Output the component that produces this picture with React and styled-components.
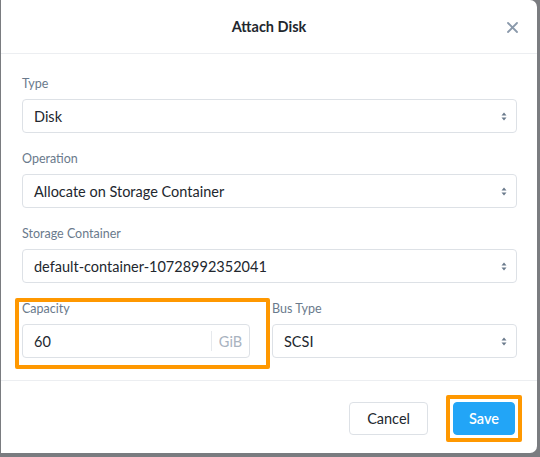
import React from 'react';
import styled, { createGlobalStyle } from 'styled-components';

const GlobalStyle = createGlobalStyle`
  html, body {
    margin: 0;
    padding: 0;
    background: #7a7c80;
    font-family: Lato, "Open Sans", sans-serif;
  }
`;

const textDark = '#22272e';
const labelGray = '#6a7a8c';
const borderGray = '#dde1e6';
const orange = '#ff9800';

const Modal = styled.div`
  width: 536px;
  height: 453px;
  margin-left: 1px;
  background: #fff;
  border-radius: 0 7px 7px 0;
  display: flex;
  flex-direction: column;
  overflow: hidden;
`;

const Header = styled.div`
  position: relative;
  height: 53px;
  display: flex;
  align-items: center;
  justify-content: center;
  border-bottom: 1px solid #eceef1;
`;

const Title = styled.h1`
  margin: 0;
  font-size: 14.5px;
  font-weight: 700;
  color: ${textDark};
`;

const CloseButton = styled.button`
  position: absolute;
  right: 18px;
  top: 20px;
  width: 14px;
  height: 14px;
  padding: 0;
  border: none;
  background: none;
  cursor: pointer;
  display: flex;
  align-items: center;
  justify-content: center;
`;

const Body = styled.div`
  padding: 22px 20px 22px 21px;
  display: flex;
  flex-direction: column;
  gap: 18px;
  border-bottom: 1px solid #eceef1;
`;

const Row = styled.div`
  display: flex;
  gap: 22px;
`;

const Field = styled.div`
  position: relative;
  display: flex;
  flex-direction: column;
  gap: 7px;
  width: ${p => p.width || 'auto'};
  flex: ${p => (p.width ? '0 0 auto' : '1')};
`;

const Highlight = styled.div`
  position: absolute;
  left: -7px;
  top: -3px;
  right: -20px;
  bottom: -11px;
  border: 4px solid ${orange};
  border-radius: 2px;
  pointer-events: none;
`;

const Label = styled.label`
  font-size: 12.5px;
  line-height: 16px;
  color: ${labelGray};
`;

const Box = styled.div`
  height: 34px;
  box-sizing: border-box;
  border: 1px solid ${borderGray};
  border-radius: 4px;
  display: flex;
  align-items: center;
  font-size: 14.5px;
  color: ${textDark};
  background: #fff;
`;

const Value = styled.span`
  flex: 1;
  padding-left: 11px;
`;

const Arrows = styled.span`
  width: 24px;
  display: flex;
  justify-content: center;
`;

const Addon = styled.span`
  width: 37px;
  align-self: stretch;
  margin: 6px 0;
  border-left: 1px solid #e6e9ed;
  display: flex;
  align-items: center;
  justify-content: center;
  color: #a9b3bf;
  font-size: 14.5px;
`;

const Footer = styled.div`
  display: flex;
  justify-content: flex-end;
  align-items: center;
  gap: 18px;
  padding: 14px 15px 0 0;
`;

const SaveFrame = styled.div`
  border: 4px solid ${orange};
  border-radius: 2px;
  padding: 3px;
  display: flex;
`;

const Button = styled.button`
  height: 33px;
  padding: 0 ${p => (p.primary ? 15 : 17)}px;
  font-family: inherit;
  font-size: 14.5px;
  font-weight: ${p => (p.primary ? 600 : 400)};
  border-radius: 4px;
  cursor: pointer;
  border: 1px solid ${p => (p.primary ? '#22a5f7' : borderGray)};
  background: ${p => (p.primary ? '#22a5f7' : '#fff')};
  color: ${p => (p.primary ? '#fff' : textDark)};
`;

const SelectArrows = () => (
  <Arrows>
    <svg width="6" height="9" viewBox="0 0 6 9">
      <path d="M3 0.5L5.5 3.5H0.5Z" fill="#6a7a8c" />
      <path d="M3 8.5L5.5 5.5H0.5Z" fill="#6a7a8c" />
    </svg>
  </Arrows>
);

const SelectField = ({ label, value, width }) => (
  <Field width={width}>
    <Label>{label}</Label>
    <Box>
      <Value>{value}</Value>
      <SelectArrows />
    </Box>
  </Field>
);

export default function App() {
  return (
    <>
      <GlobalStyle />
      <Modal>
        <Header>
          <Title>Attach Disk</Title>
          <CloseButton aria-label="Close">
            <svg width="11" height="11" viewBox="0 0 11 11">
              <path d="M1 1L10 10M10 1L1 10" stroke="#8a99ab" strokeWidth="1.8" strokeLinecap="round" />
            </svg>
          </CloseButton>
        </Header>
        <Body>
          <SelectField label="Type" value="Disk" />
          <SelectField label="Operation" value="Allocate on Storage Container" />
          <SelectField label="Storage Container" value="default-container-10728992352041" />
          <Row>
            <Field width="228px">
              <Highlight />
              <Label>Capacity</Label>
              <Box>
                <Value>60</Value>
                <Addon>GiB</Addon>
              </Box>
            </Field>
            <SelectField label="Bus Type" value="SCSI" />
          </Row>
        </Body>
        <Footer>
          <Button>Cancel</Button>
          <SaveFrame>
            <Button primary>Save</Button>
          </SaveFrame>
        </Footer>
      </Modal>
    </>
  );
}
